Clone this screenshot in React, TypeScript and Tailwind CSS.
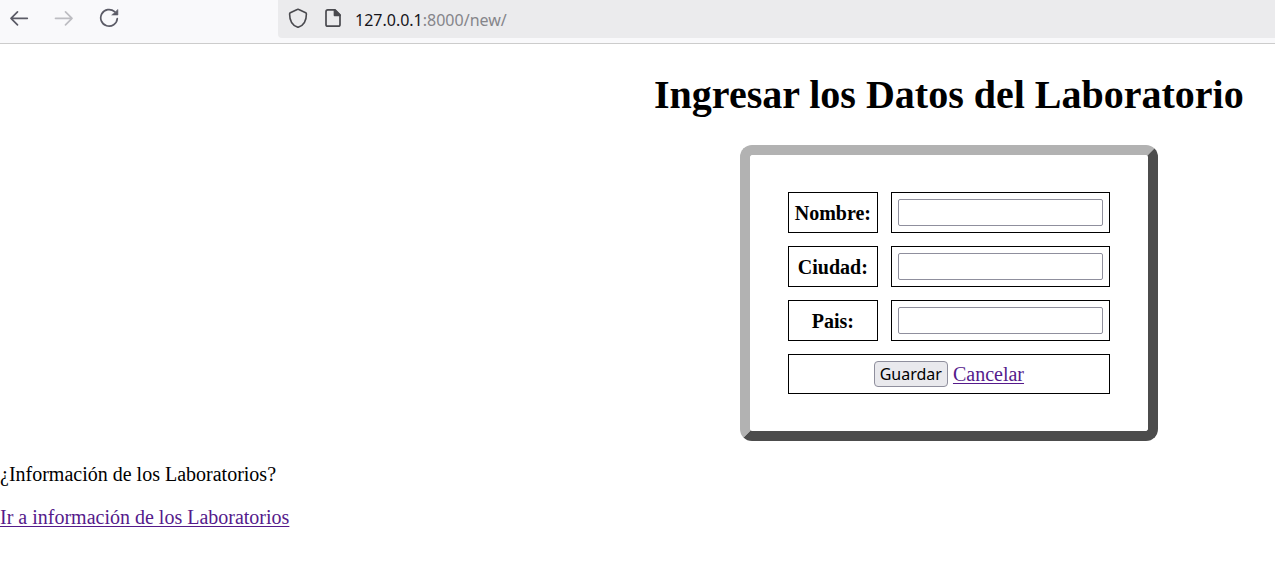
const fields = [
  { id: "nombre", label: "Nombre:" },
  { id: "ciudad", label: "Ciudad:" },
  { id: "pais", label: "Pais:" },
];

function BrowserBar() {
  return (
    <header className="flex h-11 border-b border-[#cccccc] bg-[#f9f9fb]">
      <nav className="flex w-[278px] shrink-0 items-start gap-[25px] pt-2 pl-[9px] text-[#5b5b66]">
        <button type="button" aria-label="Atrás" className="size-5">
          <svg viewBox="0 0 20 20" className="size-5" fill="none" stroke="currentColor" strokeWidth="1.7" strokeLinecap="round" strokeLinejoin="round">
            <path d="M18.300 10.300H2M8.500 3.800L2 10.300l6.500 6.500" />
          </svg>
        </button>
        <button type="button" aria-label="Adelante" disabled className="size-5 text-[#bdbdc2]">
          <svg viewBox="0 0 20 20" className="size-5" fill="none" stroke="currentColor" strokeWidth="1.7" strokeLinecap="round" strokeLinejoin="round">
            <path d="M1.500 10.300H18M11.500 3.800L18 10.300l-6.500 6.500" />
          </svg>
        </button>
        <button type="button" aria-label="Recargar" className="size-5">
          <svg viewBox="0 0 20 20" className="size-5" fill="none" stroke="currentColor" strokeWidth="1.7" strokeLinecap="round">
            <path d="M18.300 10.500A8.300 8.300 0 1 1 15.600 3.700" />
            <path d="M18.900 1.800V7H13.100Z" fill="currentColor" stroke="currentColor" strokeWidth="0.600" strokeLinejoin="round" />
          </svg>
        </button>
      </nav>
      <div className="mb-[5px] flex grow items-center rounded-bl bg-[#ebebed] pl-[10px]">
        <svg viewBox="0 0 20 20" className="mr-[15px] mb-0.5 size-5 shrink-0 text-[#4a4a4f]" fill="none" stroke="currentColor" strokeWidth="1.600" strokeLinejoin="round" aria-hidden="true">
          <path d="M9.200 1.500Q10 1 10.800 1.500L17.700 4.700Q18.400 5.100 18.400 5.900C18.400 12 16.500 16.800 10.700 19Q10 19.300 9.300 19C3.500 16.800 1.600 12 1.600 5.900Q1.600 5.100 2.300 4.700Z" />
        </svg>
        <svg viewBox="0 0 20 20" className="mr-3 mb-0.5 size-5 shrink-0 text-[#4a4a4f]" fill="none" stroke="currentColor" strokeWidth="1.700" strokeLinejoin="round" aria-hidden="true">
          <path d="M4.800 1.900H12L17 6.900V16.400Q17 18.200 15.200 18.200H4.800Q3 18.200 3 16.400V3.700Q3 1.900 4.800 1.900Z" />
          <path d="M11.500 1.900V7.300H17Z" fill="currentColor" />
        </svg>
        <p className="pt-0.5 text-base leading-6 text-[#85858a] font-['Noto_Sans',sans-serif]">
          <span className="text-[#15141a]">127.0.0.1</span>:8000/new/
        </p>
      </div>
    </header>
  );
}

function LabForm() {
  return (
    <form
      className="rounded-xl border-10 border-t-[#b2b2b2] border-r-[#4c4c4c] border-b-[#4c4c4c] border-l-[#b2b2b2] px-[25px] pt-6 pb-6"
      onSubmit={(event) => event.preventDefault()}
    >
      <table className="border-separate border-spacing-[13px]">
        <tbody>
          {fields.map(({ id, label }) => (
            <tr key={id}>
              <th scope="row" className="h-[41px] w-[90px] border border-black p-0 text-center">
                <label htmlFor={id}>{label}</label>
              </th>
              <td className="h-[41px] border border-black px-1.5 py-0">
                <input id={id} name={id} type="text" className="block h-[27px] w-[205px] rounded-xs border border-[#8f8f9d] bg-white px-1 text-base" />
              </td>
            </tr>
          ))}
          <tr>
            <td colSpan={2} className="h-10 border border-black p-0">
              <div className="flex items-center justify-center gap-[5px]">
                <button type="submit" className="h-[26px] rounded border border-[#8f8f9d] bg-[#e9e9ed] px-[5px] text-base leading-[22px] font-['Noto_Sans',sans-serif]">
                  Guardar
                </button>
                <a href="#cancelar" className="text-[#551a8b] underline decoration-1 underline-offset-2">Cancelar</a>
              </div>
            </td>
          </tr>
        </tbody>
      </table>
    </form>
  );
}

export default function App() {
  return (
    <div className="bg-white text-[20px] leading-[22px] text-black font-['Liberation_Serif',serif]">
      <BrowserBar />
      <main>
        <section className="ml-[49%] flex flex-col items-center pt-7 pr-0.5">
          <h1 className="mb-[27px] text-[40px] leading-[46px] font-bold whitespace-nowrap">
            Ingresar los Datos del Laboratorio
          </h1>
          <LabForm />
        </section>
        <p className="mt-[22px]">¿Información de los Laboratorios?</p>
        <p className="mt-[21px]">
          <a href="#laboratorios" className="text-[#551a8b] underline decoration-1 underline-offset-2">Ir a información de los Laboratorios</a>
        </p>
      </main>
    </div>
  );
}
